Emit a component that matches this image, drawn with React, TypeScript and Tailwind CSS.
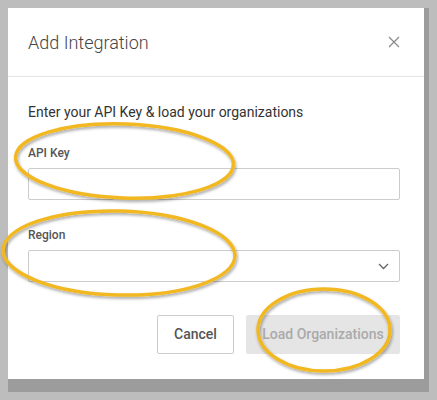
import React from "react"

function Ellipses() {
  return (
    <svg
      className="absolute left-0 top-0 pointer-events-none"
      width="437"
      height="400"
      viewBox="0 0 437 400"
    >
      <defs>
        <filter id="sh" x="-20%" y="-20%" width="140%" height="140%">
          <feDropShadow dx="1" dy="2" stdDeviation="1.5" floodColor="#000" floodOpacity="0.35" />
        </filter>
      </defs>
      <g fill="none" stroke="#f2b824" strokeWidth="3.5" filter="url(#sh)">
        <ellipse cx="124.5" cy="161" rx="109" ry="37" transform="rotate(2 124.5 161)" />
        <ellipse cx="119" cy="253" rx="116" ry="42" transform="rotate(1.5 119 253)" />
        <ellipse cx="324" cy="330" rx="66" ry="41" />
      </g>
    </svg>
  )
}

export default function App() {
  return (
    <div
      className="relative w-[437px] h-[400px] bg-[#bdbdbd] p-2 overflow-hidden"
      style={{ fontFamily: "Roboto, 'Liberation Sans', sans-serif" }}
    >
      <div className="w-[421px] h-[384px] bg-[#9c9c9c]">
        <div className="w-[416px] h-[371px] bg-white flex flex-col">
          <div className="h-[69px] border-b border-[#e5e5e5] flex items-center justify-between pl-5 pr-[24px]">
            <h1 className="text-[18px] font-light text-[#444] pt-[1px]">Add Integration</h1>
            <svg width="12" height="12" viewBox="0 0 12 12" className="text-[#888]">
              <path d="M1 1L11 11M11 1L1 11" stroke="currentColor" strokeWidth="1.2" />
            </svg>
          </div>
          <div className="px-5 pt-[26px]">
            <p className="text-[14px] leading-[18px] text-[#333]">
              Enter your API Key &amp; load your organizations
            </p>
            <label className="block mt-[25px] text-[12px] leading-[14px] font-medium text-[#555]">
              API Key
            </label>
            <input
              type="text"
              className="mt-[8px] block w-[372px] h-[32px] border border-[#ccc] rounded-[2px] outline-none"
            />
            <label className="block mt-[28px] text-[12px] leading-[14px] font-medium text-[#555]">
              Region
            </label>
            <div className="mt-[8px] w-[372px] h-[32px] border border-[#ccc] rounded-[2px] flex items-center justify-end pr-[10px]">
              <svg width="11" height="7" viewBox="0 0 11 7" className="text-[#666]">
                <path d="M1 1L5.5 5.5L10 1" fill="none" stroke="currentColor" strokeWidth="1.3" />
              </svg>
            </div>
            <div className="mt-[33px] w-[372px] flex justify-end gap-[12px]">
              <button className="w-[77px] h-[39px] border border-[#ccc] rounded-[2px] bg-white text-[14px] font-medium text-[#555]">
                Cancel
              </button>
              <button className="w-[154px] h-[39px] rounded-[2px] bg-[#e5e5e5] text-[14px] font-medium text-[#aaa]">
                Load Organizations
              </button>
            </div>
          </div>
        </div>
      </div>
      <Ellipses />
    </div>
  )
}
